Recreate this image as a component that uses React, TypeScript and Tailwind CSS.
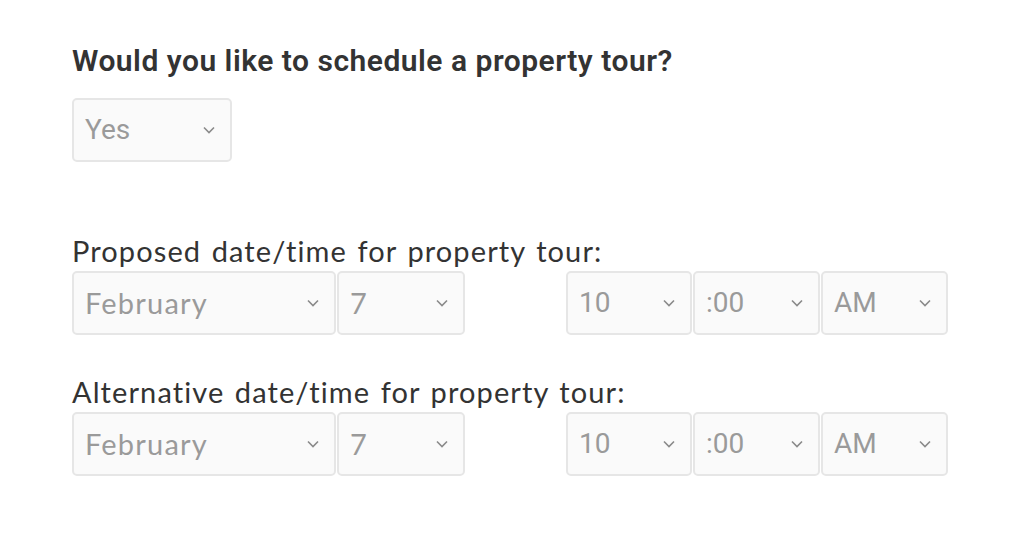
import React from 'react';

type SelectProps = {
  value: string;
  width: string;
  font: 'lato' | 'roboto';
};

function Chevron() {
  return (
    <svg width="12" height="8" viewBox="0 0 12 8" className="absolute right-[15px] top-1/2 -translate-y-1/2">
      <polyline points="1,1.5 6,6.5 11,1.5" fill="none" stroke="#8a8a8a" strokeWidth="1.6" />
    </svg>
  );
}

function FakeSelect({ value, width, font }: SelectProps) {
  const text =
    font === 'lato'
      ? "font-['Lato',sans-serif] text-[29px] tracking-[1.2px]"
      : "font-['Roboto',sans-serif] text-[28px]";
  return (
    <div
      className={`relative h-[64px] ${width} rounded-[5px] border-2 border-[#e6e6e6] bg-[#fafafa] pl-[11px] flex items-center`}
    >
      <span className={`${text} text-[#9a9a9a]`}>{value}</span>
      <Chevron />
    </div>
  );
}

function DateTimeRow({ label }: { label: string }) {
  return (
    <div>
      <p className="font-['Lato',sans-serif] text-[29px] tracking-[1.1px] [word-spacing:2px] leading-[34px] text-[#333]">
        {label}
      </p>
      <div className="mt-[3px] flex">
        <div className="flex gap-[1px]">
          <FakeSelect value="February" width="w-[264px]" font="lato" />
          <FakeSelect value="7" width="w-[128px]" font="lato" />
        </div>
        <div className="ml-[101px] flex gap-[1px]">
          <FakeSelect value="10" width="w-[126px]" font="roboto" />
          <FakeSelect value=":00" width="w-[127px]" font="roboto" />
          <FakeSelect value="AM" width="w-[127px]" font="roboto" />
        </div>
      </div>
    </div>
  );
}

export default function App() {
  return (
    <div className="w-[1032px] h-[538px] bg-white pl-[72px] pt-[43px]">
      <h2 className="font-['Roboto',sans-serif] font-semibold text-[30px] tracking-[0.5px] leading-[36px] text-[#333]">
        Would you like to schedule a property tour?
      </h2>
      <div className="mt-[19px]">
        <FakeSelect value="Yes" width="w-[160px]" font="roboto" />
      </div>
      <div className="mt-[72px]">
        <DateTimeRow label="Proposed date/time for property tour:" />
      </div>
      <div className="mt-[40px]">
        <DateTimeRow label="Alternative date/time for property tour:" />
      </div>
    </div>
  );
}
